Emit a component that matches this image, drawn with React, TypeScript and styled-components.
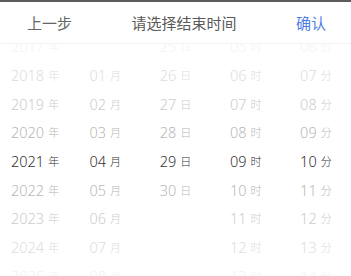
import { createGlobalStyle } from "styled-components";
import styled from "styled-components";

const GlobalStyle = createGlobalStyle`
    html, body {
        margin: 0;
        padding: 0;
        background: #ffffff;
    }
    body {
        font-family: "Noto Sans", "Noto Sans CJK SC", sans-serif;
    }
`

const ROW = 28.67;
const OFFSET = -13; // wheel offset, center row sits at y=160

const Sheet = styled.div`
    width: 351px;
    height: 276px;
    overflow: hidden;
    background: #fff;
    border-top: 2px solid #5c5c5c;
    box-sizing: border-box;
    display: flex;
    flex-direction: column;
`

const Toolbar = styled.div`
    height: 41px;
    flex-shrink: 0;
    display: flex;
    align-items: center;
    justify-content: space-between;
    padding: 0 25px 0 27px;
    font-family: "Noto Sans CJK SC", sans-serif;
    font-size: 15px;
    position: relative;
    z-index: 2;
    background: #fff;
    border-bottom: 1px solid #f4f4f4;
`

const ToolButton = styled.span<{ $primary?: boolean }>`
    color: ${p => p.$primary ? "#4f7de6" : "#666"};
`

const Title = styled.span`
    color: #595959;
`

const Wheels = styled.div`
    flex: 1;
    display: grid;
    grid-template-columns: repeat(5, 1fr);
    overflow: hidden;
    position: relative;
`

const Column = styled.div`
    display: flex;
    flex-direction: column;
`

const Item = styled.div<{ $shade: string }>`
    height: ${ROW}px;
    display: flex;
    align-items: center;
    justify-content: center;
    gap: 4px;
    color: ${p => p.$shade};
`

const Num = styled.span`
    font-size: 14.5px;
    font-family: "Noto Sans", sans-serif;
    font-weight: 300;
`

const Unit = styled.span`
    font-size: 11px;
    font-weight: 300;
    font-family: "Noto Sans CJK SC", sans-serif;
`

const shades = ["#333333", "#b8b8b8", "#cccccc", "#dddddd", "#f3f3f3"];

// index 4 is the selected row
const columns: { unit: string, values: string[] }[] = [
    { unit: "年", values: ["2017", "2018", "2019", "2020", "2021", "2022", "2023", "2024", "2025"] },
    { unit: "月", values: ["", "01", "02", "03", "04", "05", "06", "07", "08"] },
    { unit: "日", values: ["25", "26", "27", "28", "29", "30", "", "", ""] },
    { unit: "时", values: ["05", "06", "07", "08", "09", "10", "11", "12", "13"] },
    { unit: "分", values: ["06", "07", "08", "09", "10", "11", "12", "13", "14"] },
];

export default function App() {
    return (
        <>
            <GlobalStyle />
            <Sheet>
                <Toolbar>
                    <ToolButton>上一步</ToolButton>
                    <Title>请选择结束时间</Title>
                    <ToolButton $primary>确认</ToolButton>
                </Toolbar>
                <Wheels>
                    {columns.map((col, c) => (
                        <Column key={c} style={{ transform: `translateY(${OFFSET + 1}px)` }}>
                            {col.values.map((v, i) => (
                                <Item key={i} $shade={shades[Math.min(Math.abs(i - 4), 4)]}>
                                    {v ? <><Num>{v}</Num><Unit>{col.unit}</Unit></> : null}
                                </Item>
                            ))}
                        </Column>
                    ))}
                </Wheels>
            </Sheet>
        </>
    );
}
